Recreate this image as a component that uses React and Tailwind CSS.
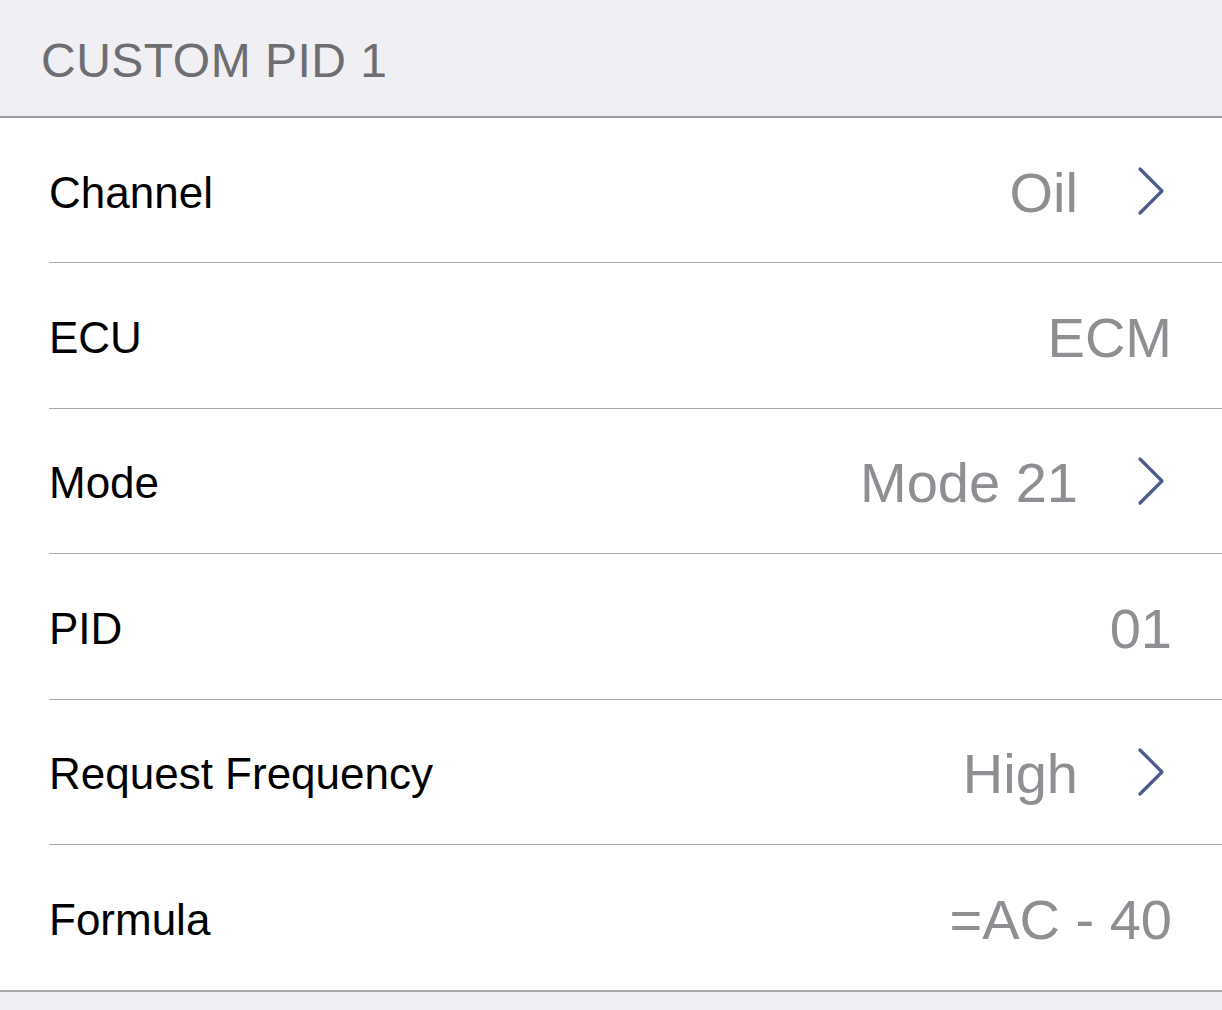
const rows = [
  { label: "Channel", value: "Oil", chevron: true },
  { label: "ECU", value: "ECM" },
  { label: "Mode", value: "Mode 21", chevron: true },
  { label: "PID", value: "01" },
  { label: "Request Frequency", value: "High", chevron: true },
  { label: "Formula", value: "=AC - 40" },
];

const Chevron = () => (
  <svg width="30" height="50" viewBox="0 0 30 50" className="shrink-0">
    <path
      d="M4 3 L26 25 L4 47"
      fill="none"
      stroke="#4d5b8b"
      strokeWidth="3.2"
      strokeLinecap="round"
      strokeLinejoin="round"
    />
  </svg>
);

const App = () => {
  return (
    <div className="w-[1222px] h-[1010px] bg-[#efeff4] font-['Liberation_Sans',Arial,sans-serif] overflow-hidden">
      <div className="h-[118px] flex items-end pl-[41px] pb-[31px] border-b-2 border-[#9c9ca0]">
        <span className="text-[48px] leading-none text-[#6d6d72] tracking-[0.5px]">
          CUSTOM PID 1
        </span>
      </div>
      <div className="bg-white border-b-2 border-[#a9a9ad]">
        {rows.map((row, i) => (
          <div key={row.label} className="pl-[49px]">
            <div
              className={
                "h-[145.4px] pt-[5px] flex items-center justify-between " +
                (i < rows.length - 1 ? "border-b border-[#a9a9ad]" : "")
              }
            >
              <span className="text-[44px] text-black leading-none">{row.label}</span>
              <div className="flex items-center">
                <span className="text-[56px] text-[#8e8e93] leading-none">{row.value}</span>
                {row.chevron ? (
                  <div className="ml-[58px] mr-[56px] -mt-[4px]">
                    <Chevron />
                  </div>
                ) : (
                  <div className="w-[50px]" />
                )}
              </div>
            </div>
          </div>
        ))}
      </div>
    </div>
  );
};

export default App;
